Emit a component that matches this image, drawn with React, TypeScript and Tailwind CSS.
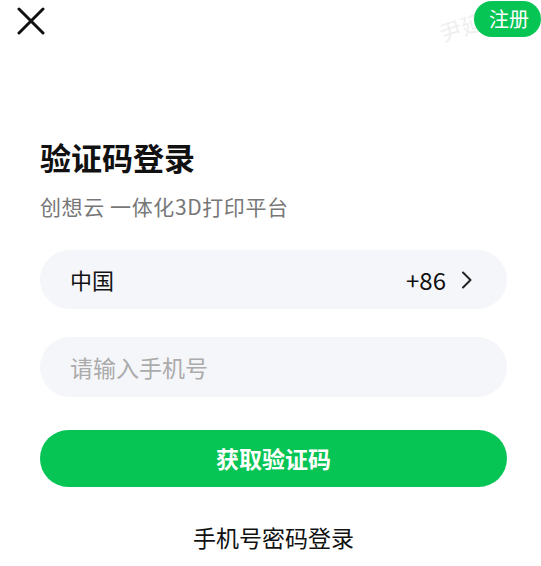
import * as React from "react";

const cjk = { fontFamily: '"Noto Sans CJK SC", "Noto Sans", sans-serif' };

function CloseIcon() {
  return (
    <svg width="28" height="28" viewBox="0 0 28 28" fill="none">
      <path d="M2 2L26 26M26 2L2 26" stroke="#111" strokeWidth="3" strokeLinecap="round" />
    </svg>
  );
}

function Chevron() {
  return (
    <svg width="12" height="18" viewBox="0 0 12 18" fill="none">
      <path d="M2 1.5L9.5 9L2 16.5" stroke="#222" strokeWidth="2" strokeLinecap="round" strokeLinejoin="round" />
    </svg>
  );
}

export default function App() {
  return (
    <div className="relative w-[541px] h-[566px] bg-white overflow-hidden" style={cjk}>
      {/* header */}
      <div className="flex items-start justify-between h-[40px]">
        <button className="ml-[17px] mt-[7px]">
          <CloseIcon />
        </button>
        <div className="relative">
          {/* faint watermark behind the register button */}
          <span className="absolute right-[58px] top-[10px] -rotate-[18deg] whitespace-nowrap text-[22px] text-[#efefef] select-none">
            尹延
          </span>
          <button className="relative mt-[1px] h-[36px] pl-[15px] pr-[12px] rounded-full bg-[#07c555] text-white text-[20px] leading-[36px]">
            注册
          </button>
        </div>
      </div>

      {/* content */}
      <div className="flex flex-col pl-[40px] pr-[34px]">
        <h1 className="mt-[99px] text-[31px] leading-[36px] font-bold text-[#111]">验证码登录</h1>
        <p className="mt-[17px] text-[21px] leading-[28px] tracking-[0.6px] text-[#777]">创想云 一体化3D打印平台</p>

        <div className="mt-[30px] flex items-center justify-between h-[59px] rounded-full bg-[#f5f6fa] pl-[30px] pr-[34px]">
          <span className="text-[22px] text-[#111]">中国</span>
          <div className="flex items-center gap-[15px]">
            <span className="text-[24px] text-[#111]">+86</span>
            <Chevron />
          </div>
        </div>

        <div className="mt-[28px] flex items-center h-[60px] rounded-full bg-[#f5f6fa] pl-[30px]">
          <span className="text-[23px] text-[#ababab]">请输入手机号</span>
        </div>

        <button className="mt-[33px] h-[57px] rounded-full bg-[#07c555] text-white text-[23px] font-bold">
          获取验证码
        </button>

        <p className="mt-[35px] text-center text-[23px] leading-[30px] text-[#111]">手机号密码登录</p>
      </div>
    </div>
  );
}
